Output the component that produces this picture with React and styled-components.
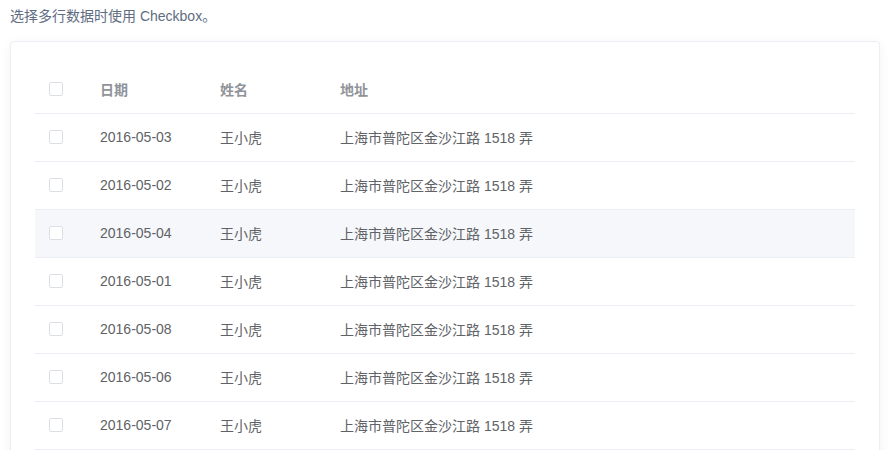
import React from "react";
import styled, { createGlobalStyle } from "styled-components";

const Global = createGlobalStyle`
  html, body { margin: 0; padding: 0; background: #fff; }
  body { font-family: "Liberation Sans", "Noto Sans CJK SC", sans-serif; }
`;

const Page = styled.div`
  padding: 0 8px 0 10px;
`;

const Desc = styled.p`
  margin: 0;
  padding-top: 5px;
  font-size: 14px;
  line-height: 22px;
  color: #5e6d82;
`;

const Card = styled.div`
  margin-top: 14px;
  width: 870px;
  box-sizing: border-box;
  border: 1px solid #ebeef5;
  border-radius: 4px;
  box-shadow: 0 2px 12px rgba(0, 0, 0, 0.05);
  padding: 23px 24px 24px 24px;
  background: #fff;
`;

const Table = styled.table`
  width: 100%;
  border-collapse: collapse;
  table-layout: fixed;
  font-size: 14px;
  color: #606266;
`;

const Row = styled.tr`
  background: ${(p) => (p.$hover ? "#f5f7fa" : "#fff")};
`;

const Th = styled.th`
  box-sizing: border-box;
  height: 48px;
  padding: 0 10px;
  text-align: left;
  font-weight: bold;
  color: #909399;
  border-bottom: 1px solid #ebeef5;
  width: ${(p) => p.$w || "auto"};
`;

const Td = styled.td`
  box-sizing: border-box;
  height: 48px;
  padding: 0 10px;
  text-align: left;
  border-bottom: 1px solid #ebeef5;
`;

const SelTh = styled(Th)`
  padding: 0 14px;
`;

const SelTd = styled(Td)`
  padding: 0 14px;
`;

const Box = styled.span`
  display: block;
  width: 14px;
  height: 14px;
  box-sizing: border-box;
  border: 1px solid #dcdfe6;
  border-radius: 2px;
  background: #fff;
`;

const rows = ["2016-05-03", "2016-05-02", "2016-05-04", "2016-05-01", "2016-05-08", "2016-05-06", "2016-05-07"];

export default function App() {
  return (
    <Page>
      <Global />
      <Desc>选择多行数据时使用 Checkbox。</Desc>
      <Card>
        <Table>
          <thead>
            <tr>
              <SelTh $w="55px"><Box /></SelTh>
              <Th $w="120px">日期</Th>
              <Th $w="120px">姓名</Th>
              <Th>地址</Th>
            </tr>
          </thead>
          <tbody>
            {rows.map((d, i) => (
              <Row key={d} $hover={i === 2}>
                <SelTd><Box /></SelTd>
                <Td>{d}</Td>
                <Td>王小虎</Td>
                <Td>上海市普陀区金沙江路 1518 弄</Td>
              </Row>
            ))}
          </tbody>
        </Table>
      </Card>
    </Page>
  );
}
